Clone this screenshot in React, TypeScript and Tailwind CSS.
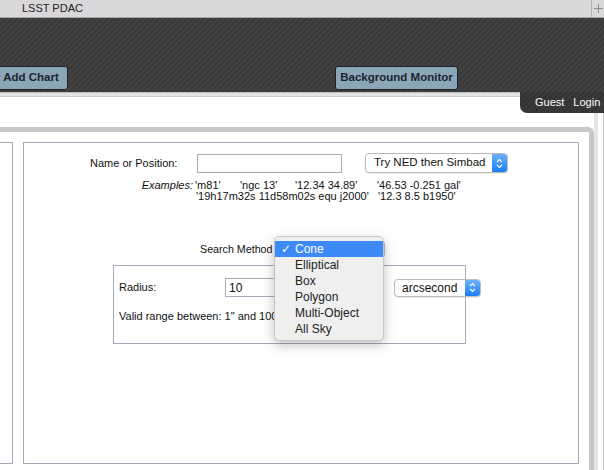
import React from "react";

function MacSelect({
  label,
  className,
  textClass,
}: {
  label: string;
  className: string;
  textClass: string;
}) {
  return (
    <div
      className={`flex shrink-0 overflow-hidden rounded-[4px] border border-[#bcbcbc] bg-white shadow-[0_1px_1px_rgba(0,0,0,0.08)] ${className}`}
    >
      <div className={`flex flex-1 items-center whitespace-nowrap text-[#111] ${textClass}`}>{label}</div>
      <div className="flex w-[15px] items-center justify-center bg-[linear-gradient(#6bb2fb,#1b7df4)]">
        <svg width="7" height="11" viewBox="0 0 7 11">
          <path
            d="M1 4.2L3.5 1.7L6 4.2M1 6.8L3.5 9.3L6 6.8"
            stroke="white"
            strokeWidth="1.2"
            fill="none"
          />
        </svg>
      </div>
    </div>
  );
}

export default function App() {
  const items = ["Cone", "Elliptical", "Box", "Polygon", "Multi-Object", "All Sky"];
  return (
    <div className="relative h-[470px] w-[604px] overflow-hidden bg-white font-['Liberation_Sans',Arial,sans-serif] text-[#111]">
      {/* title bar */}
      <div className="flex h-[18px] border-b border-[#a9a9a9] bg-[#d9d7d9]">
        <div className="pl-[22px] text-[11px] leading-[17px] text-[#222]">LSST PDAC</div>
        <div className="ml-auto flex w-[13px] items-center justify-center border-l border-[#b0b0b0]">
          <svg width="9" height="9" viewBox="0 0 9 9">
            <path d="M4.5 0V9M0 4.5H9" stroke="#8a8a8a" strokeWidth="1" />
          </svg>
        </div>
      </div>

      {/* dark header */}
      <div className="flex h-[74px] items-start bg-[repeating-linear-gradient(135deg,#3a3a3a_0px,#3a3a3a_2px,#424242_2px,#424242_4px)] pt-[48px]">
        <div className="ml-[-6px] flex h-[24px] w-[74px] shrink-0 items-center justify-center rounded-[3px] border border-[#1d2226] bg-[#8ba6b8] text-[11.5px] font-bold text-[#1b2430]">
          Add Chart
        </div>
        <div className="ml-[267px] flex h-[24px] w-[123px] shrink-0 items-center justify-center rounded-[3px] border border-[#1d2226] bg-[#8ba6b8] text-[11.5px] font-bold text-[#1b2430]">
          Background Monitor
        </div>
      </div>

      {/* strip */}
      <div className="h-[5px] border-y border-t-[#bcbcbc] border-b-[#cacaca] bg-[#e4e4e4]" />

      <div className="flex">
        <div className="flex w-[594px] flex-col">
          <div className="h-[30px]" />
          <div className="flex h-[343px] rounded-tr-[6px] border-r-[5px] border-t-[5px] border-[#c8c8c8] pt-[10px]">
            <div className="ml-[-20px] h-[322px] w-[33px] shrink-0 border border-[#a3acb9]" />
            <div className="relative ml-[10px] h-[322px] w-[556px] shrink-0 border border-[#a3acb9]">
              {/* Name or position row */}
              <div className="mt-[10px] flex h-[20px] items-center pl-[66px]">
                <div className="w-[107px] shrink-0 whitespace-nowrap text-[11px]">Name or Position:</div>
                <div className="h-[19px] w-[145px] shrink-0 border border-[#a9afba] bg-white" />
                <MacSelect
                  label="Try NED then Simbad"
                  className="ml-[23px] h-[20px] w-[143px]"
                  textClass="pl-[8px] text-[11.5px]"
                />
              </div>

              {/* examples */}
              <div className="mt-[7px] flex pl-[116px] text-[11px] leading-[11px]">
                <div className="w-[53px] shrink-0 whitespace-nowrap text-right italic">Examples:</div>
                <div className="ml-[2px] grid grid-cols-[45px_55px_82px_auto] whitespace-nowrap">
                  <div>'m81'</div>
                  <div>'ngc 13'</div>
                  <div>'12.34 34.89'</div>
                  <div>'46.53 -0.251 gal'</div>
                  <div className="col-span-3 pl-[1px]">'19h17m32s 11d58m02s equ j2000'</div>
                  <div className="pl-[1px]">'12.3 8.5 b1950'</div>
                </div>
              </div>

              {/* search method */}
              <div className="mt-[38px] flex h-[18px] items-center pl-[176px]">
                <div className="w-[74px] shrink-0 whitespace-nowrap text-[10.7px]">Search Method</div>
                <MacSelect label="Cone" className="h-[18px] w-[111px]" textClass="pl-[8px] text-[12px]" />
              </div>

              {/* inner box */}
              <div className="ml-[89px] mt-[7px] h-[79px] w-[353px] border border-[#a3acb9] pt-[12px]">
                <div className="flex h-[19px] items-center">
                  <div className="w-[111px] shrink-0 pl-[5px] text-[11px]">Radius:</div>
                  <div className="flex h-[19px] w-[130px] shrink-0 items-center border border-[#a9afba] pl-[3px] text-[12px]">
                    10
                  </div>
                  <MacSelect
                    label="arcsecond"
                    className="ml-[39px] h-[18px] w-[87px]"
                    textClass="pl-[7px] text-[12px]"
                  />
                </div>
                <div className="mt-[13px] whitespace-nowrap pl-[5px] text-[11px] leading-[12px]">
                  Valid range between: 1" and 1000"
                </div>
              </div>

              {/* open dropdown menu */}
              <div className="absolute left-[250px] top-[93px] h-[105px] w-[110px] rounded-[5px] border border-[#c6c6c6] bg-[#efefef] pt-[4px] shadow-[0_4px_12px_rgba(0,0,0,0.25)]">
                {items.map((it, i) => (
                  <div
                    key={it}
                    className={
                      i === 0
                        ? "flex h-[16px] items-center bg-[#3d8af7] pl-[6px] text-[12px] leading-[16px] text-white"
                        : "flex h-[16px] items-center pl-[20px] text-[12px] leading-[16px] text-[#222]"
                    }
                  >
                    {i === 0 && (
                      <span className="w-[14px] font-['DejaVu_Sans',sans-serif] text-[12px] leading-[16px]">✓</span>
                    )}
                    {it}
                  </div>
                ))}
              </div>
            </div>
          </div>
        </div>
        {/* right rail */}
        <div className="flex h-[373px] w-[10px]">
          <div className="w-[4px] bg-[#e5e5e5]" />
          <div className="w-[5px] bg-white" />
          <div className="w-[1px] bg-[#c4c4c4]" />
        </div>
      </div>

      {/* Guest / Login tab */}
      <div className="absolute right-0 top-[92px] flex h-[21px] w-[84px] items-center gap-[9px] rounded-bl-[7px] bg-[repeating-linear-gradient(135deg,#333333_0px,#333333_2px,#3a3a3a_2px,#3a3a3a_4px)] pl-[15px] text-[11px] text-white">
        <span>Guest</span>
        <span>Login</span>
      </div>
    </div>
  );
}
